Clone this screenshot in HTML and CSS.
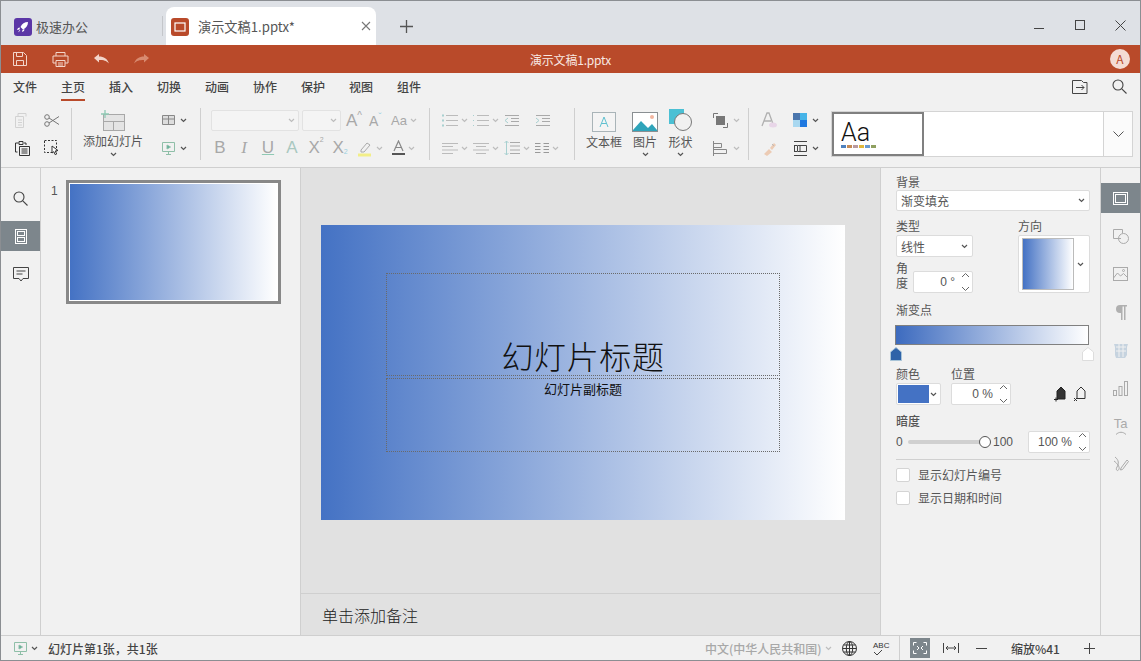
FILE: index.html
```html
<!DOCTYPE html>
<html lang="zh-CN">
<head>
    <meta charset="UTF-8">
    <title>演示文稿1.pptx</title>
    <link rel="stylesheet" href="styles.css">
</head>
<body>
<svg class="defs" width="0" height="0">
    <symbol id="chev" viewBox="0 0 7 5"><path d="M1 1l2.5 2.5L6 1" fill="none" stroke="currentColor" stroke-width="1.2"/></symbol>
    <symbol id="spin" viewBox="0 0 9 22"><path d="M1 6l3.5-3.5L8 6M1 16l3.5 3.5L8 16" fill="none" stroke="#666" stroke-width="1"/></symbol>
</svg>
<div class="window">
    <div class="tabbar">
        <div class="tab-home">
            <svg class="tab-icon" width="18" height="18" viewBox="0 0 18 18"><rect width="18" height="18" rx="3" fill="#5b36a6"/><path d="M14 4c-3.500 0-6 1.800-7.500 5l2.500 2.500C12.200 10 14 7.500 14 4zM6 9.500l-2 .5-1 2 2.500-.5zM8.500 12l-.5 2 2-1 .5-2zM5.500 12l.8.8-2.300 1.500z" fill="#fff"/></svg>
            <span>极速办公</span>
        </div>
        <div class="tab-sep"></div>
        <div class="tab-doc">
            <svg class="tab-icon" width="18" height="18" viewBox="0 0 18 18"><rect width="18" height="18" rx="3" fill="#b94a2a"/><rect x="4" y="5" width="10" height="8" fill="none" stroke="#fff" stroke-width="1.200"/></svg>
            <span class="tab-name">演示文稿1.pptx*</span>
            <svg class="tab-close" width="10" height="10" viewBox="0 0 10 10"><path d="M1 1l8 8M9 1l-8 8" stroke="#777" stroke-width="1.100"/></svg>
        </div>
        <svg class="tab-add" width="13" height="13" viewBox="0 0 13 13"><path d="M6.500 0v13M0 6.500h13" stroke="#555" stroke-width="1.300"/></svg>
        <div class="win-btns">
            <svg width="10" height="10" viewBox="0 0 10 10"><path d="M0 8.500h10" stroke="#444"/></svg>
            <svg width="10" height="10" viewBox="0 0 10 10"><rect x=".5" y=".5" width="9" height="9" fill="none" stroke="#444"/></svg>
            <svg width="11" height="11" viewBox="0 0 11 11"><path d="M.5.500l10 10M10.500.500l-10 10" stroke="#444"/></svg>
        </div>
    </div>

    <div class="titlebar">
        <div class="quick">
            <svg width="14" height="14" viewBox="0 0 14 14" fill="none" stroke="#f3d5ca"><path d="M.5.500h10l3 3v10H.5zM3.500.500v4h6v-4M3.500 13.500v-5h7v5"/></svg>
            <svg width="17" height="15" viewBox="0 0 17 15" fill="none" stroke="#f3d5ca"><path d="M4 4V.500h9V4M4 11H1V4h15v7h-3M4 8.500h9v6H4zM6 11h5M6 13h5"/></svg>
            <svg width="15" height="10" viewBox="0 0 15 10"><path d="M0 4l5-4v2.500c5 0 8 2 10 7-3-3-5-3.500-10-3.500V8.500z" fill="#f3d5ca"/></svg>
            <svg width="15" height="10" viewBox="0 0 15 10"><path d="M15 4l-5-4v2.500c-5 0-8 2-10 7 3-3 5-3.500 10-3.500v2.500z" fill="#d88a70"/></svg>
        </div>
        <div class="doc-title">演示文稿1.pptx</div>
        <div class="avatar">A</div>
    </div>

    <div class="menubar">
        <span class="menu-item">文件</span>
        <span class="menu-item active">主页</span>
        <span class="menu-item">插入</span>
        <span class="menu-item">切换</span>
        <span class="menu-item">动画</span>
        <span class="menu-item">协作</span>
        <span class="menu-item">保护</span>
        <span class="menu-item">视图</span>
        <span class="menu-item">组件</span>
        <div class="menu-right">
            <svg width="17" height="15" viewBox="0 0 17 15" fill="none" stroke="#444"><path d="M.5 1.500h9l2 2h3.500v11H.5zM4 8.500h8M9.500 6l2.500 2.500L9.500 11"/></svg>
            <svg width="15" height="15" viewBox="0 0 15 15" fill="none" stroke="#444" stroke-width="1.100"><circle cx="6" cy="6" r="5"/><path d="M9.800 9.800L14.500 14.500"/></svg>
        </div>
    </div>

    <div class="toolbar">
        <div class="group g-clip">
            <div class="tool"><svg width="15" height="15" viewBox="0 0 15 15" fill="none" stroke="#d2d2d2"><path d="M3 3.500V.500h8v3M.5 3.500h8v11H.500zM3 7h4M3 9.500h4M3 12h4"/></svg></div>
            <div class="tool"><svg width="16" height="13" viewBox="0 0 16 13" fill="none" stroke="#777"><circle cx="3" cy="3" r="2.300"/><circle cx="3" cy="10" r="2.300"/><path d="M5 4l10 6.500M5 9L15 2.500"/></svg></div>
            <div class="tool"><svg width="15" height="15" viewBox="0 0 15 15" fill="none" stroke="#333"><path d="M2.500 11H.5V2h3M9 2h2v2M4 .5h4v3H4zM4.500 5.500h10v9h-10zM6.500 8h6M6.500 10h6M6.500 12h6"/></svg></div>
            <div class="tool"><svg width="15" height="16" viewBox="0 0 15 16" fill="none"><rect x=".5" y=".5" width="12" height="12" stroke="#333" stroke-dasharray="2 1.500"/><path d="M8 6l6 4.500-2.800.5 1.500 3-1.500.7-1.400-3L8 13z" fill="#fff" stroke="#333"/></svg></div>
        </div>
        <div class="sep"></div>
        <div class="group g-slide">
            <div class="big add-slide">
                <svg width="24" height="21" viewBox="0 0 24 21" fill="none"><rect x="2.500" y="4.500" width="21" height="16" fill="#e4e4e4" stroke="#a8a8a8"/><path d="M2.500 11.500h21M12.500 11.500v9" stroke="#a8a8a8"/><path d="M4 0v8M0 4h8" stroke="#8fc9b4" stroke-width="1.300"/></svg>
                <span>添加幻灯片</span>
                <svg class="chev dark"><use href="#chev"/></svg>
            </div>
            <div class="small-col">
                <div class="tool"><svg width="13" height="10" viewBox="0 0 13 10" fill="#ddd" stroke="#888"><path d="M.5.500h12v9H.5zM.5 4h12M6.500.500v9"/></svg><svg class="chev dark"><use href="#chev"/></svg></div>
                <div class="tool"><svg width="13" height="13" viewBox="0 0 13 13" fill="none" stroke="#8fbfa8"><path d="M.5.500h12v9H.5zM6.500 9.500v3M4 12.500h5"/><path d="M5 3l3.500 2L5 7z" fill="#5a9"/></svg><svg class="chev dark"><use href="#chev"/></svg></div>
            </div>
        </div>
        <div class="sep"></div>
        <div class="group g-font">
            <div class="tool-row font-row">
                <div class="combo font-name"><svg class="chev"><use href="#chev"/></svg></div>
                <div class="combo font-size"><svg class="chev"><use href="#chev"/></svg></div>
                <span class="glyph big-a">A<sup>^</sup></span>
                <span class="glyph mid-a">A<sup class="blue">ˇ</sup></span>
                <span class="glyph aa">Aa<svg class="chev"><use href="#chev"/></svg></span>
            </div>
            <div class="tool-row style-row">
                <span class="glyph st">B</span>
                <span class="glyph st ital">I</span>
                <span class="glyph st under">U</span>
                <span class="glyph st tint">A</span>
                <span class="glyph st">X<sup class="tiny">2</sup></span>
                <span class="glyph st">X<sub class="tiny blue">2</sub></span>
                <span class="st wide"><svg width="17" height="17" viewBox="0 0 17 17" fill="none"><path d="M4 10l6-7 3 2-6 7H4z" stroke="#aaa"/><path d="M1 15h13" stroke="#f2ee88" stroke-width="3"/></svg><svg class="chev"><use href="#chev"/></svg></span>
                <span class="st wide"><svg width="15" height="16" viewBox="0 0 15 16" fill="none"><path d="M3 11L7.500 1 12 11M4.800 7.500h5.500" stroke="#888" stroke-width="1.200"/><path d="M1 14h13" stroke="#555" stroke-width="2"/></svg><svg class="chev"><use href="#chev"/></svg></span>
            </div>
        </div>
        <div class="sep"></div>
        <div class="group g-para">
            <div class="tool wide-left"><svg width="16" height="13" viewBox="0 0 16 13" fill="none"><path d="M4 1.500h12M4 6.500h12M4 11.500h12" stroke="#bbb"/><path d="M0 1.500h2M0 6.500h2M0 11.500h2" stroke="#a8d0d0" stroke-width="2"/></svg><svg class="chev"><use href="#chev"/></svg></div>
            <div class="tool wide-left"><svg width="16" height="13" viewBox="0 0 16 13" fill="none"><path d="M4 1.500h12M4 6.500h12M4 11.500h12" stroke="#bbb"/><path d="M0 1.500h2M0 6.500h2M0 11.500h2" stroke="#a8d0d0" stroke-dasharray="1 1"/></svg><svg class="chev"><use href="#chev"/></svg></div>
            <div class="tool wide-left"><svg width="16" height="13" viewBox="0 0 16 13" fill="none"><path d="M1 1.500h14M7 4.500h8M7 7.500h8M1 11.500h14" stroke="#aaa"/><path d="M4 4L1 6.500 4 9" stroke="#a8d0d0"/></svg></div>
            <div class="tool wide-left"><svg width="16" height="13" viewBox="0 0 16 13" fill="none"><path d="M1 1.500h14M7 4.500h8M7 7.500h8M1 11.500h14" stroke="#aaa"/><path d="M1 4l3 2.500L1 9" stroke="#a8d0d0"/></svg></div>
            <div class="tool wide-left"><svg width="16" height="13" viewBox="0 0 16 13" fill="none" stroke="#bbb"><path d="M0 1.500h16M0 4.500h11M0 8h16M0 11.500h11"/></svg><svg class="chev"><use href="#chev"/></svg></div>
            <div class="tool wide-left"><svg width="16" height="13" viewBox="0 0 16 13" fill="none" stroke="#bbb"><path d="M0 1.500h16M3 4.500h10M0 8h16M3 11.500h10"/></svg><svg class="chev"><use href="#chev"/></svg></div>
            <div class="tool wide-left"><svg width="16" height="14" viewBox="0 0 16 14" fill="none"><path d="M6 1.500h10M6 5h10M6 9h10M6 12.500h10" stroke="#aaa"/><path d="M2.500 0v14M.5 2l2-2 2 2M.5 12l2 2 2-2" stroke="#a8d0d0"/></svg><svg class="chev"><use href="#chev"/></svg></div>
            <div class="tool wide-left"><svg width="14" height="13" viewBox="0 0 14 13" fill="none" stroke="#999"><path d="M0 1.500h5.500M8.500 1.500h5.500M0 4.500h5.500M8.500 4.500h5.500M0 7.500h5.500M8.500 7.500h5.500M0 10.500h5.500M8.500 10.500h5.500"/></svg><svg class="chev"><use href="#chev"/></svg></div>
        </div>
        <div class="sep"></div>
        <div class="group g-insert">
            <div class="big ins-text">
                <svg width="24" height="20" viewBox="0 0 24 20" fill="none"><rect x=".5" y=".5" width="23" height="19" fill="#f4f4f4" stroke="#a9b4b8"/><path d="M8 15l4-10 4 10M9.500 11.500h5" stroke="#5fc0d0"/></svg>
                <span>文本框</span>
            </div>
            <div class="big ins-pic">
                <svg width="26" height="20" viewBox="0 0 26 20"><rect x=".5" y=".5" width="25" height="19" fill="#fff" stroke="#8a8f92"/><path d="M1 18l8-9 7 7 4-4 5 6v1H1z" fill="#2fa4ba"/><circle cx="20" cy="5" r="2" fill="#f2b6a0"/></svg>
                <span>图片</span>
                <svg class="chev dark"><use href="#chev"/></svg>
            </div>
            <div class="big ins-shape">
                <svg width="25" height="23" viewBox="0 0 25 23"><rect x="1" y="0" width="15" height="15" fill="#4bc0d4"/><circle cx="15" cy="13" r="8.500" fill="#f1f1f1" stroke="#777"/></svg>
                <span>形状</span>
                <svg class="chev dark"><use href="#chev"/></svg>
            </div>
            <div class="small-col arrange">
                <div class="tool"><svg width="15" height="15" viewBox="0 0 15 15" fill="none" stroke="#777"><path d="M5 .5H.5V5M10 14.500h4.500V10"/><rect x="3.500" y="3.500" width="8" height="8" fill="#777"/></svg><svg class="chev"><use href="#chev"/></svg></div>
                <div class="tool"><svg width="15" height="15" viewBox="0 0 15 15" fill="none" stroke="#888"><path d="M.5 0v15M.5 2.500h8v4h-8M.5 8.500h13v4h-13"/></svg><svg class="chev"><use href="#chev"/></svg></div>
            </div>
        </div>
        <div class="sep"></div>
        <div class="group g-style">
            <div class="tool"><svg width="16" height="16" viewBox="0 0 16 16"><path d="M1 14L6 1h2l4 11M3 9h7" fill="none" stroke="#b0b0b0" stroke-width="1.300"/><ellipse cx="12" cy="13" rx="4" ry="2.500" fill="#e8d6e8"/></svg></div>
            <div class="tool"><svg width="14" height="14" viewBox="0 0 14 14"><rect width="7" height="7" fill="#4a76ad"/><rect x="7" width="7" height="7" fill="#46b4e8"/><rect width="7" height="7" y="7" fill="#a9d8f0"/><rect x="7" y="7" width="7" height="7" fill="#1f78e0"/></svg><svg class="chev dark"><use href="#chev"/></svg></div>
            <div class="tool"><svg width="15" height="15" viewBox="0 0 15 15"><path d="M2 13l5-5 3 3-5 4zM8 7l4-5 2 2-4 5z" fill="#eccbb4"/><path d="M10 3l2 2" stroke="#bbb"/></svg></div>
            <div class="tool"><svg width="13" height="15" viewBox="0 0 13 15" fill="none" stroke="#444"><path d="M0 .5h13M0 14.500h13M.5 4.500v6M3.500 4.500h9v6h-9zM6 4.500v6M0 4.500h3M0 10.500h3"/></svg><svg class="chev dark"><use href="#chev"/></svg></div>
        </div>
        <div class="gallery">
            <div class="theme-card">
                <span class="theme-aa">Aa</span>
                <div class="theme-dots"><i></i><i></i><i></i><i></i><i></i><i></i></div>
            </div>
            <div class="theme-fill"></div>
            <div class="theme-more"><svg width="11" height="7" viewBox="0 0 11 7"><path d="M.5.500l5 5 5-5" fill="none" stroke="#555"/></svg></div>
        </div>
    </div>

    <div class="main">
        <div class="rail">
            <div class="rail-item"><svg width="15" height="15" viewBox="0 0 15 15" fill="none" stroke="#444" stroke-width="1.100"><circle cx="6" cy="6" r="5"/><path d="M9.800 9.800L14.500 14.500"/></svg></div>
            <div class="rail-item on"><svg width="12" height="15" viewBox="0 0 12 15" fill="none" stroke="#fff"><rect x=".5" y=".5" width="11" height="14"/><rect x="2.500" y="2.500" width="7" height="4"/><rect x="2.500" y="8.500" width="7" height="4"/></svg></div>
            <div class="rail-item"><svg width="16" height="15" viewBox="0 0 16 15" fill="none" stroke="#444"><path d="M.5.500h15v11H10l-2 2.500-2-2.500H.5zM3.500 4h9M3.500 7h6"/></svg></div>
        </div>

        <div class="thumbs">
            <span class="thumb-no">1</span>
            <div class="thumb"><div class="thumb-fill"></div></div>
        </div>

        <div class="canvas">
            <div class="stage">
                <div class="slide">
                    <div class="ph ph-title"><span>幻灯片标题</span></div>
                    <div class="ph ph-sub"><span>幻灯片副标题</span></div>
                </div>
            </div>
            <div class="notes">单击添加备注</div>
        </div>

        <div class="pane">
            <div class="lbl">背景</div>
            <div class="field bg-select">渐变填充<svg class="chev dark"><use href="#chev"/></svg></div>
            <div class="pane-split">
                <div class="split-left">
                    <div class="lbl">类型</div>
                    <div class="field type-select">线性<svg class="chev dark"><use href="#chev"/></svg></div>
                    <div class="angle-row">
                        <div class="lbl angle-lbl">角<br>度</div>
                        <div class="field num angle-input">0 °<svg class="spin"><use href="#spin"/></svg></div>
                    </div>
                </div>
                <div class="split-right">
                    <div class="lbl">方向</div>
                    <div class="field dir-box"><div class="dir-swatch"></div><svg class="chev dark"><use href="#chev"/></svg></div>
                </div>
            </div>
            <div class="lbl stops-lbl">渐变点</div>
            <div class="grad-bar"></div>
            <div class="stops">
                <svg width="12" height="14" viewBox="0 0 12 14"><path d="M.5 13.500V5L6 .5 11.500 5v8.500z" fill="#2f63a8" stroke="#a8c4d8"/></svg>
                <svg width="12" height="14" viewBox="0 0 12 14"><path d="M.5 13.500V5L6 .5 11.500 5v8.500z" fill="#fff" stroke="#ddd"/></svg>
            </div>
            <div class="color-labels"><span class="lbl">颜色</span><span class="lbl">位置</span></div>
            <div class="color-row">
                <div class="field color-btn"><div class="color-chip"></div><svg class="chev dark"><use href="#chev"/></svg></div>
                <div class="field num pos-input">0 %<svg class="spin"><use href="#spin"/></svg></div>
                <div class="stop-btns">
                    <svg width="12" height="16" viewBox="0 0 12 16"><path d="M3 13V5l4-4 4 4v8z" fill="#333" stroke="#222"/><path d="M0 13.500h4M2 11.500v4" stroke="#222"/></svg>
                    <svg width="12" height="16" viewBox="0 0 12 16" fill="none" stroke="#333"><path d="M3 12.500h8V5L7 1 3 5zM0 12l3 3M3 12l-3 3"/></svg>
                </div>
            </div>
            <div class="lbl dim-lbl">暗度</div>
            <div class="dim-row">
                <span class="dim-min">0</span>
                <div class="slider"><div class="knob"></div></div>
                <span class="dim-max">100</span>
                <div class="field num dim-input">100 %<svg class="spin"><use href="#spin"/></svg></div>
            </div>
            <div class="pane-hr"></div>
            <label class="check"><i></i>显示幻灯片编号</label>
            <label class="check"><i></i>显示日期和时间</label>
        </div>

        <div class="rail rail-right">
            <div class="rail-item on"><svg width="15" height="13" viewBox="0 0 15 13" fill="none" stroke="#fff"><rect x=".5" y=".5" width="14" height="12"/><rect x="2.500" y="2.500" width="10" height="8"/></svg></div>
            <div class="rail-item"><svg width="16" height="15" viewBox="0 0 16 15" fill="none" stroke="#aaa"><path d="M8 9.500H.5v-9h9V4"/><circle cx="10.500" cy="9.500" r="5"/></svg></div>
            <div class="rail-item"><svg width="15" height="14" viewBox="0 0 15 14" fill="none" stroke="#aaa"><rect x=".5" y=".5" width="14" height="13"/><path d="M.5 11l4-5 3 3 3-2.500 4 4"/><circle cx="10.500" cy="3.500" r="1"/></svg></div>
            <div class="rail-item"><svg width="12" height="15" viewBox="0 0 12 15"><path d="M5 0h7v1.500h-1.500V15H9V1.500H7.500V15H6V8H5A4 4 0 0 1 5 0z" fill="#b0b0b0"/></svg></div>
            <div class="rail-item"><svg width="16" height="15" viewBox="0 0 16 15"><path d="M1 1h14l-1 3v8l-2 3H3l-1-3V4z" fill="#c6d3df"/><path d="M3 4h10M3 8h10M6 1v13M10 1v13" stroke="#f1f1f1"/></svg></div>
            <div class="rail-item"><svg width="15" height="15" viewBox="0 0 15 15" fill="none" stroke="#aaa"><rect x=".5" y="9.500" width="3" height="5"/><rect x="6" y="5.500" width="3" height="9"/><rect x="11.500" y=".5" width="3" height="14"/></svg></div>
            <div class="rail-item ta-item"><span>Ta</span><svg width="12" height="4" viewBox="0 0 12 4"><path d="M1 3.500C4 .5 8 .5 11 3.500" fill="none" stroke="#aaa"/></svg></div>
            <div class="rail-item"><svg width="16" height="16" viewBox="0 0 16 16" fill="none" stroke="#aaa"><path d="M2 1c4 3 4 7 2 10-2 3 1 5 2 2 1-2-2-6-5-8M8 12l6-8 1.500 1.500-6 8-2 .5z"/></svg></div>
        </div>
    </div>

    <div class="statusbar">
        <svg class="st-play" width="13" height="13" viewBox="0 0 13 13" fill="none" stroke="#8fbfa8"><path d="M.5.500h12v9H.5zM6.500 9.500v3M4 12.500h5"/><path d="M5 3l3.500 2L5 7z" fill="#5a9"/></svg>
        <svg class="chev dark"><use href="#chev"/></svg>
        <span class="st-text">幻灯片第1张，共1张</span>
        <div class="st-right">
            <span class="st-lang">中文(中华人民共和国)</span>
            <svg class="chev"><use href="#chev"/></svg>
            <svg class="st-globe" width="15" height="15" viewBox="0 0 15 15" fill="none" stroke="#333"><circle cx="7.500" cy="7.500" r="7"/><ellipse cx="7.500" cy="7.500" rx="3.200" ry="7"/><path d="M7.500.500v14M.5 7.500h14M1.500 4h12M1.500 11h12"/></svg>
            <span class="st-spell"><b>ABC</b><svg width="10" height="6" viewBox="0 0 10 6"><path d="M1 2l3 3 5-5" fill="none" stroke="#444"/></svg></span>
            <div class="st-sep"></div>
            <div class="st-fit"><svg width="14" height="12" viewBox="0 0 14 12" fill="none" stroke="#fff"><path d="M.5 3.500v-3h3M10.500.500h3v3M13.500 8.500v3h-3M3.500 11.500h-3v-3M4 4l2 2-2 2M10 4L8 6l2 2"/></svg></div>
            <svg class="st-width" width="16" height="10" viewBox="0 0 16 10" fill="none" stroke="#444"><path d="M.5 0v10M15.500 0v10M3 5h10M5 3L3 5l2 2M11 3l2 2-2 2"/></svg>
            <svg class="st-minus" width="11" height="1" viewBox="0 0 11 1"><path d="M0 .5h11" stroke="#444"/></svg>
            <span class="st-zoom">缩放%41</span>
            <svg class="st-plus" width="11" height="11" viewBox="0 0 11 11"><path d="M5.500 0v11M0 5.500h11" stroke="#444"/></svg>
        </div>
    </div>
</div>
</body>
</html>
```

FILE: styles.css
```css
* {
    box-sizing: border-box;
}

body {
    margin: 0;
    font-family: "Noto Sans CJK SC", "Liberation Sans", sans-serif;
    font-size: 12px;
    color: #555;
    background: #f1f1f1;
}

.defs {
    display: none;
}

.window {
    width: 1141px;
    height: 661px;
    border: 1px solid #8b8e92;
    display: flex;
    flex-direction: column;
    overflow: hidden;
}

svg {
    flex: none;
    display: block;
}

.chev {
    width: 7px;
    height: 5px;
    color: #bdbdbd;
}

.chev.dark {
    color: #555;
}

/* tab strip */
.tabbar {
    height: 44px;
    background: #dee1e6;
    display: flex;
    align-items: flex-end;
    flex: none;
}

.tab-home {
    width: 161px;
    height: 38px;
    padding-left: 13px;
    display: flex;
    align-items: center;
    gap: 4px;
    font-size: 13px;
    color: #555;
}

.tab-icon {
    margin-top: 1px;
}

.tab-sep {
    width: 1px;
    height: 20px;
    background: #c4c6ca;
    margin-bottom: 9px;
}

.tab-doc {
    width: 210px;
    height: 38px;
    margin-left: 3px;
    padding-left: 5px;
    padding-right: 5px;
    background: #fff;
    border-radius: 8px 8px 0 0;
    display: flex;
    align-items: center;
    font-size: 13.2px;
    color: #555;
}

.tab-name {
    margin-left: 9px;
    flex: 1;
}

.tab-add {
    margin-left: 24px;
    margin-bottom: 12px;
}

.win-btns {
    margin-left: auto;
    width: 92px;
    height: 38px;
    margin-right: 14px;
    display: flex;
    justify-content: space-between;
    align-items: center;
    padding-bottom: 2px;
}

/* red title strip */
.titlebar {
    height: 28px;
    background: #b94a2a;
    display: flex;
    align-items: center;
    flex: none;
}

.quick {
    width: 150px;
    padding-left: 12px;
    display: flex;
    align-items: center;
    gap: 25px;
}

.doc-title {
    margin-left: 379px;
    color: #f8e8e2;
    font-size: 12px;
    letter-spacing: -.2px;
}

.avatar {
    margin-left: auto;
    margin-right: 10px;
    width: 20px;
    height: 20px;
    border-radius: 50%;
    background: #f4dcd4;
    color: #b94a2a;
    font-size: 12px;
    text-align: center;
    line-height: 20px;
}

/* tabs of the ribbon */
.menubar {
    height: 28px;
    display: flex;
    flex: none;
    background: #f1f1f1;
}

.menu-item {
    width: 48px;
    text-align: center;
    line-height: 27px;
    font-weight: 500;
    color: #444;
    position: relative;
}

.menu-item.active::after {
    content: "";
    position: absolute;
    left: 12px;
    right: 12px;
    bottom: 0;
    height: 2px;
    background: #b94a2a;
}

.menu-right {
    margin-left: auto;
    margin-right: 13px;
    display: flex;
    align-items: center;
    gap: 23px;
    padding-bottom: 2px;
}

/* ribbon */
.toolbar {
    height: 67px;
    flex: none;
    display: flex;
    align-items: center;
    background: #f1f1f1;
    border-bottom: 1px solid #cfcfcf;
}

.group {
    height: 56px;
    display: flex;
}

.sep {
    width: 1px;
    height: 52px;
    background: #cfcfcf;
    flex: none;
}

.tool {
    height: 28px;
    display: flex;
    align-items: center;
    justify-content: center;
    gap: 5px;
}

.tool-row {
    display: flex;
    align-items: center;
    height: 28px;
}

.g-clip {
    width: 70px;
    padding-left: 7px;
    display: grid;
    grid-template-columns: 29px 29px;
    grid-auto-rows: 28px;
}

.big {
    display: flex;
    flex-direction: column;
    align-items: center;
    color: #555;
    line-height: 16px;
    padding-top: 4px;
}

.big span {
    margin-top: 2px;
}

.big .chev {
    margin-top: 3px;
}

.g-slide {
    width: 128px;
}

.add-slide {
    width: 60px;
    margin-left: 11px;
    white-space: nowrap;
}

.small-col {
    margin-left: 15px;
    width: 32px;
}

.g-font {
    width: 228px;
    padding-left: 7px;
    display: block;
}

.font-row {
    padding-left: 3px;
    padding-top: 1px;
}

.combo {
    height: 21px;
    background: #f4f4f4;
    border: 1px solid #e2e2e2;
    border-radius: 2px;
    display: flex;
    align-items: center;
    justify-content: flex-end;
    padding-right: 3px;
}

.font-name {
    width: 88px;
}

.font-size {
    width: 39px;
    margin-left: 3px;
}

.glyph {
    font-family: "Liberation Sans", sans-serif;
    color: #a8a8a8;
    display: flex;
    align-items: center;
}

.glyph sup {
    font-size: 10px;
    line-height: 1;
    align-self: flex-start;
}

.big-a {
    font-size: 17px;
    margin-left: 5px;
    width: 23px;
}

.mid-a {
    font-size: 14px;
    width: 22px;
}

.blue {
    color: #9ad0e0;
}

.aa {
    font-size: 13px;
    gap: 3px;
}

.st {
    width: 24px;
    font-size: 17px;
    height: 28px;
    justify-content: center;
}

.st.wide {
    width: 32px;
    display: flex;
    align-items: center;
    gap: 2px;
}

.style-row .wide:nth-last-child(2) {
    margin-left: 2px;
}

.style-row .wide:last-child {
    margin-left: 1px;
}

.ital {
    font-style: italic;
    font-family: "Liberation Serif", serif;
}

.under {
    text-decoration: underline;
    text-decoration-color: #8fc9b4;
}

.tint {
    color: #a9c8c0;
}

.glyph .tiny {
    font-size: 7px;
    line-height: 1;
    margin-top: 2px;
}

.glyph sub.tiny {
    align-self: flex-end;
    margin-bottom: 7px;
}

.g-para {
    width: 144px;
    padding-left: 5px;
    display: grid;
    grid-template-columns: repeat(4, 31px);
    grid-auto-rows: 28px;
}

.wide-left {
    justify-content: flex-start;
    padding-left: 7px;
    gap: 3px;
}

.g-insert {
    width: 173px;
}

.ins-text {
    width: 36px;
    margin-left: 11px;
    padding-top: 6px;
}

.ins-pic {
    width: 26px;
    margin-left: 10px;
    padding-top: 6px;
}

.ins-shape {
    width: 25px;
    margin-left: 10px;
    padding-top: 3px;
}

.ins-pic .chev {
    margin-top: 2px;
}

.ins-shape .chev {
    margin-top: 2px;
}

.arrange {
    margin-left: 17px;
}

.g-style {
    width: 81px;
    padding-left: 8px;
    display: grid;
    grid-template-columns: 24px 44px;
    grid-auto-rows: 28px;
}

.g-style .tool:nth-child(even) {
    padding-left: 6px;
}

.gallery {
    width: 302px;
    height: 46px;
    margin-left: 1px;
    background: #fff;
    border: 1px solid #d4d4d4;
    display: flex;
}

.theme-card {
    width: 92px;
    border: 2px solid #808080;
    padding: 5px 0 0 7px;
}

.theme-aa {
    display: block;
    font-family: Roboto, "Liberation Sans", sans-serif;
    font-weight: 300;
    font-size: 25px;
    line-height: 28px;
    color: #111;
}

.theme-dots {
    display: flex;
    gap: 1px;
    margin-top: -2px;
}

.theme-dots i {
    width: 5px;
    height: 3px;
    background: #4f81bd;
}

.theme-dots i:nth-child(2) {
    background: #c58b55;
}

.theme-dots i:nth-child(3) {
    background: #b99aa0;
}

.theme-dots i:nth-child(4) {
    background: #e0b83c;
}

.theme-dots i:nth-child(5) {
    background: #6a9bd0;
}

.theme-dots i:nth-child(6) {
    background: #8fa060;
}

.theme-fill {
    flex: 1;
}

.theme-more {
    width: 29px;
    border-left: 1px solid #d4d4d4;
    background: #fbfbfb;
    display: flex;
    align-items: center;
    justify-content: center;
}

/* work area */
.main {
    flex: 1;
    display: flex;
    min-height: 0;
}

.rail {
    width: 40px;
    flex: none;
    border-right: 1px solid #cfcfcf;
    padding-top: 15px;
    display: flex;
    flex-direction: column;
    gap: 8px;
}

.rail-item {
    height: 30px;
    display: flex;
    align-items: center;
    justify-content: center;
}

.rail-item.on {
    background: #7d868c;
}

.rail-right {
    width: 39px;
    border-right: 0;
}

.ta-item {
    flex-direction: column;
    color: #aaa;
    font-family: "Liberation Sans", sans-serif;
    font-size: 13px;
    line-height: 14px;
}

.thumbs {
    width: 260px;
    flex: none;
    border-right: 1px solid #cfcfcf;
    padding: 12px 0 0 10px;
    display: flex;
    align-items: flex-start;
}

.thumb-no {
    font-family: "Liberation Sans", sans-serif;
    font-size: 12px;
    line-height: 20px;
    margin-top: 1px;
    width: 15px;
    color: #555;
}

.thumb {
    width: 215px;
    height: 124px;
    border: 3px solid #888;
    background: #fff;
    padding: 1px;
}

.thumb-fill {
    height: 100%;
    background: linear-gradient(90deg, #4472c4, #fff);
}

.canvas {
    width: 579px;
    flex: none;
    display: flex;
    flex-direction: column;
    background: #e1e1e1;
}

.stage {
    flex: 1;
    padding: 57px 0 0 20px;
}

.slide {
    width: 524px;
    height: 295px;
    position: relative;
    background: linear-gradient(90deg, #4472c4, #fff);
    color: #111;
}

.ph {
    position: absolute;
    left: 65px;
    width: 394px;
    border: 1px dotted #6a6a6a;
    text-align: center;
}

.ph-title {
    top: 48px;
    height: 103px;
    font-size: 32px;
    font-weight: 300;
    letter-spacing: .6px;
    line-height: 40px;
    padding-top: 61px;
}

.ph-sub {
    top: 153px;
    height: 74px;
    font-size: 13px;
    line-height: 19px;
}

.notes {
    height: 42px;
    flex: none;
    border-top: 1px solid #cfcfcf;
    padding-left: 21px;
    line-height: 42px;
    font-size: 16px;
    font-weight: 300;
    color: #222;
}

/* properties pane */
.pane {
    width: 221px;
    flex: none;
    border-left: 1px solid #cfcfcf;
    border-right: 1px solid #cfcfcf;
    padding: 7px 10px 0 15px;
}

.lbl {
    line-height: 14px;
    color: #555;
}

.field {
    background: #fff;
    border: 1px solid #dcdcdc;
    border-radius: 2px;
    color: #555;
    display: flex;
    align-items: center;
}

.bg-select {
    width: 194px;
    height: 21px;
    margin-top: 1px;
    padding: 0 4px;
    justify-content: space-between;
}

.pane-split {
    display: flex;
    margin-top: 8px;
}

.split-left {
    width: 122px;
}

.type-select {
    width: 77px;
    height: 22px;
    margin-top: 2px;
    padding: 0 4px;
    justify-content: space-between;
}

.angle-row {
    display: flex;
    align-items: flex-start;
    gap: 5px;
    width: 77px;
    margin-top: 3px;
}

.angle-lbl {
    width: 12px;
    line-height: 15px;
}

.num {
    justify-content: flex-end;
    height: 22px;
    padding-right: 2px;
    gap: 2px;
    font-family: "Liberation Sans", sans-serif;
}

.spin {
    width: 9px;
    height: 22px;
    margin-left: 4px;
}

.angle-input {
    width: 60px;
    margin-top: 11px;
}

.dir-box {
    width: 72px;
    height: 58px;
    margin-top: 2px;
    padding: 2px 5px 2px 3px;
    justify-content: space-between;
}

.dir-swatch {
    width: 52px;
    height: 52px;
    border: 1px solid #bbb;
    background: linear-gradient(90deg, #4472c4, #fff);
}

.stops-lbl {
    margin-top: 10px;
}

.grad-bar {
    width: 194px;
    height: 20px;
    margin: 8px 0 0 -1px;
    border: 1.5px solid #808080;
    background: linear-gradient(90deg, #3d6bbf, #fff);
}

.stops {
    width: 204px;
    height: 14px;
    margin: 2px 0 0 -6px;
    display: flex;
    justify-content: space-between;
}

.color-labels {
    display: flex;
    margin-top: 6px;
}

.color-labels .lbl {
    width: 55px;
}

.color-row {
    display: flex;
    margin-top: 2px;
}

.color-btn {
    width: 45px;
    height: 22px;
    padding: 1px 3px 1px 1px;
    justify-content: space-between;
}

.color-chip {
    width: 31px;
    height: 18px;
    background: #4472c4;
}

.pos-input {
    width: 60px;
    margin-left: 10px;
}

.stop-btns {
    margin-left: 43px;
    display: flex;
    gap: 8px;
    align-items: center;
}

.dim-lbl {
    margin-top: 9px;
    font-weight: 500;
}

.dim-row {
    display: flex;
    align-items: center;
    margin-top: 3px;
    height: 22px;
}

.dim-min {
    width: 12px;
    font-family: "Liberation Sans", sans-serif;
}

.slider {
    width: 77px;
    height: 4px;
    background: #d0d0d0;
    border-radius: 2px;
    position: relative;
}

.knob {
    position: absolute;
    right: -6px;
    top: -4px;
    width: 12px;
    height: 12px;
    border-radius: 50%;
    background: #fff;
    border: 1px solid #555;
}

.dim-max {
    margin-left: 8px;
    width: 35px;
    font-family: "Liberation Sans", sans-serif;
}

.dim-input {
    width: 62px;
}

.pane-hr {
    width: 194px;
    height: 1px;
    background: #d0d0d0;
    margin-top: 6px;
}

.check {
    display: flex;
    align-items: center;
    gap: 8px;
    height: 23px;
    color: #555;
}

.check:first-of-type {
    margin-top: 3px;
}

.check i {
    width: 14px;
    height: 14px;
    background: #fff;
    border: 1px solid #d4d4d4;
    border-radius: 2px;
}

/* status line */
.statusbar {
    height: 25px;
    flex: none;
    border-top: 1px solid #cfcfcf;
    display: flex;
    align-items: center;
    background: #f1f1f1;
}

.st-play {
    margin-left: 13px;
    margin-right: 4px;
}

.st-text {
    margin-left: 10px;
    font-weight: 500;
    color: #444;
}

.st-right {
    margin-left: auto;
    width: 435px;
    height: 100%;
    display: flex;
    align-items: center;
}

.st-lang {
    color: #a8a8a8;
    font-weight: 500;
    width: 120px;
    white-space: nowrap;
}

.st-globe {
    margin-left: 10px;
}

.st-spell {
    margin-left: 16px;
    width: 16px;
    font-family: "Liberation Sans", sans-serif;
    font-size: 8px;
    line-height: 8px;
    color: #333;
    padding-top: 2px;
}

.st-spell b {
    display: block;
    font-weight: 400;
}

.st-sep {
    width: 1px;
    height: 100%;
    margin-left: 10px;
    background: #cfcfcf;
}

.st-fit {
    width: 20px;
    height: 20px;
    margin-left: 10px;
    background: #7d868c;
    display: flex;
    align-items: center;
    justify-content: center;
}

.st-width {
    margin-left: 13px;
}

.st-minus {
    margin-left: 17px;
}

.st-zoom {
    margin-left: 24px;
    width: 52px;
    font-weight: 500;
    color: #444;
    white-space: nowrap;
}

.st-plus {
    margin-left: 21px;
}
```
